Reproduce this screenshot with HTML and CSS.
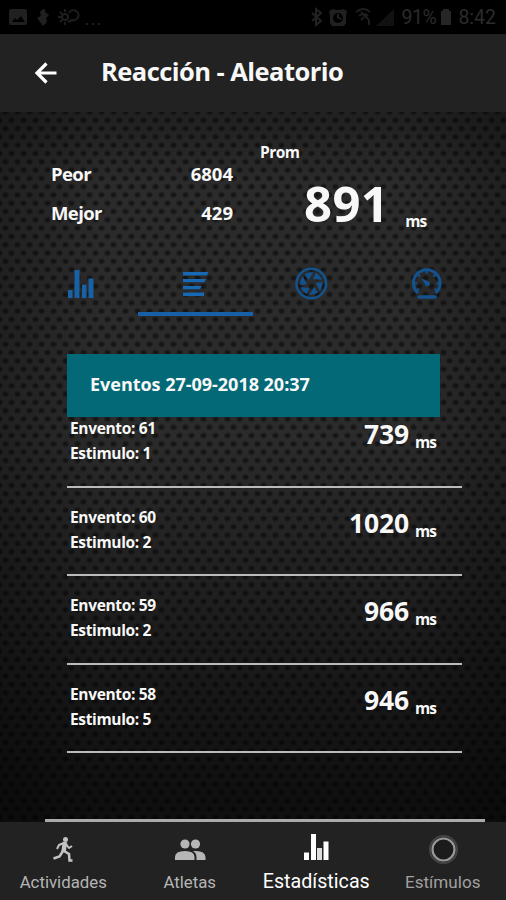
FILE: index.html
```html
<!DOCTYPE html>
<html lang="es">
<head>
    <meta charset="UTF-8">
    <meta name="viewport" content="width=device-width, initial-scale=1.0">
    <title>Reacción - Aleatorio</title>
    <link rel="stylesheet" href="styles.css">
</head>
<body>

    <!-- Status Bar -->
    <div class="status-bar">
        <svg class="status-left" width="96" height="34" viewBox="0 0 96 34">
            <path fill-rule="evenodd" d="M11 9h14q2 0 2 2v12q0 2-2 2H11q-2 0-2-2V11q0-2 2-2zM12 22h13l-4-6-4 4-2-2z"/>
            <path d="M43 9a2 2 0 0 1 2 3l4 3-3 3 1 4-4 4-3-4-3-4 4-2-1-4z"/>
            <g fill="none" stroke="#1e1e1e" stroke-width="2">
                <circle cx="65" cy="17" r="3"/>
                <path d="M65 9v3M65 22v3M58 17h3M60 12l2 2M60 22l2-2M69 13a5 5 0 1 1 3 7l-4 2"/>
            </g>
            <path d="M86 23h2v2h-2zM92 23h2v2h-2zM98 23h2v2h-2z"/>
        </svg>
        <div class="status-right">
            <svg class="status-signals" width="88" height="34" viewBox="0 0 88 34">
                <path fill="none" stroke="#222" stroke-width="2" d="M5 13l9 8-5 4V9l5 4-9 8"/>
                <path fill-rule="evenodd" d="M22 11l4-2 3 1h4l3-1 4 2-1 5v7l-2 3H25l-2-3v-7zM31 13a5 5 0 1 0 0 10 5 5 0 0 0 0-10zM30 14h2v3l3 2-1 1-4-2z"/>
                <path fill="none" stroke="#1e1e1e" stroke-width="2" d="M49 12q8-6 14 0M52 16q5-4 9 0M54 12l8 8M54 20l3-3M62 20v5"/>
                <path fill="#111" d="M69 26L87 9v17z"/>
            </svg>
            <span class="battery">91%</span>
            <svg width="14" height="34" viewBox="0 0 14 34"><path fill="#262626" d="M4 9h6v2h2v14H2V11h2z"/></svg>
            <span class="clock">8:42</span>
        </div>
    </div>

    <!-- Header -->
    <div class="header">
        <svg class="back" width="24" height="24" viewBox="0 0 24 24">
            <path d="M23.500 12H3.500M13.500 2.500L4 12l9.500 9.500"/>
        </svg>
        <h1>Reacción - Aleatorio</h1>
    </div>

    <div class="content">
        <!-- Summary -->
        <div class="summary">
            <div class="limits">
                <div class="limit"><span>Peor</span><span class="limit-value">6804</span></div>
                <div class="limit"><span>Mejor</span><span class="limit-value">429</span></div>
            </div>
            <div class="average">
                <div class="average-label">Prom</div>
                <div class="average-value"><span class="number">891</span><span class="unit">ms</span></div>
            </div>
        </div>

        <!-- Tabs -->
        <div class="tabs">
            <div class="tab">
                <svg width="36" height="36" viewBox="0 0 36 36" fill="#1761a4">
                    <path d="M6 25h4.500v8H6zM12.500 5h5v28h-5zM20 19.500h4.500V33H20zM26.500 13.500h5V33h-5z"/>
                </svg>
            </div>
            <div class="tab active">
                <svg width="36" height="36" viewBox="0 0 36 36" fill="#1769b4">
                    <path d="M6 7h25.500L30 10.500H6zM6 14h23l-1.500 3.300H6zM6 21h18.500L23 24.300H6zM6 27.500h21V31H6z"/>
                </svg>
            </div>
            <div class="tab">
                <svg width="36" height="36" viewBox="0 0 36 36">
                    <circle cx="18.300" cy="18.500" r="14.800" fill="none" stroke="#13528d" stroke-width="2.500"/>
                    <g fill="#13528d">
                        <path id="blade" d="M11.500 9.500Q15 7 20.500 7.300L15.500 15z"/>
                        <use href="#blade" transform="rotate(60 18.300 18.500)"/>
                        <use href="#blade" transform="rotate(120 18.300 18.500)"/>
                        <use href="#blade" transform="rotate(180 18.300 18.500)"/>
                        <use href="#blade" transform="rotate(240 18.300 18.500)"/>
                        <use href="#blade" transform="rotate(300 18.300 18.500)"/>
                    </g>
                </svg>
            </div>
            <div class="tab">
                <svg width="36" height="36" viewBox="0 0 36 36" fill="none" stroke="#13528d">
                    <path stroke-width="3" d="M10 28a13.300 13.300 0 1 1 17.500 0"/>
                    <path stroke-width="2" d="M18.700 5v3.500M10 9.500l2 2M27.500 9.500l-2 2M5.500 18.500H9M28.500 18.500H32M9 25l2-1M28.500 25l-2-1"/>
                    <path fill="#13528d" stroke="none" d="M13.500 13.500l6.500 2.700a2.600 2.600 0 1 1-3 3.300z"/>
                    <path stroke-width="3.500" stroke-linecap="round" d="M11 32h16"/>
                </svg>
            </div>
        </div>

        <!-- Event List -->
        <div class="events">
            <div class="events-title"><span>Eventos 27-09-2018 20:37</span></div>
            <div class="event">
                <div class="event-info"><div>Envento: 61</div><div>Estimulo: 1</div></div>
                <div class="event-time"><span class="number">739</span><span class="unit">ms</span></div>
            </div>
            <div class="event">
                <div class="event-info"><div>Envento: 60</div><div>Estimulo: 2</div></div>
                <div class="event-time"><span class="number">1020</span><span class="unit">ms</span></div>
            </div>
            <div class="event">
                <div class="event-info"><div>Envento: 59</div><div>Estimulo: 2</div></div>
                <div class="event-time"><span class="number">966</span><span class="unit">ms</span></div>
            </div>
            <div class="event">
                <div class="event-info"><div>Envento: 58</div><div>Estimulo: 5</div></div>
                <div class="event-time"><span class="number">946</span><span class="unit">ms</span></div>
            </div>
        </div>
        <div class="bottom-line"></div>
    </div>

    <!-- Bottom Navigation -->
    <div class="bottom-nav">
        <div class="nav-item">
            <svg width="32" height="32" viewBox="0 0 32 32">
                <circle cx="18.500" cy="5.500" r="2.500" fill="#c4c4c4"/>
                <path fill="none" stroke="#c4c4c4" stroke-width="2" stroke-linejoin="round" d="M17 9l-5 2-2 4M19 10l3 4 3-2"/>
                <path fill="none" stroke="#c4c4c4" stroke-width="4.500" d="M18 8l-1.500 10"/>
                <path fill="none" stroke="#c4c4c4" stroke-width="2.500" d="M16 17l-3.500 5.500-6 2M17 17l5 3 .5 6.500h3"/>
            </svg>
            <span>Actividades</span>
        </div>
        <div class="nav-item">
            <svg width="34" height="32" viewBox="0 0 34 32" fill="#b6b6b6">
                <circle cx="12" cy="10" r="4.600"/>
                <circle cx="22.500" cy="10" r="4.600"/>
                <path d="M2 26v-3q0-6 10-6 9.500 0 9.500 6v3zM20 17q12-1 12.500 6v3H23.500v-3q0-4-3.500-6z"/>
            </svg>
            <span>Atletas</span>
        </div>
        <div class="nav-item selected">
            <svg width="32" height="32" viewBox="0 0 32 32" fill="#fff">
                <path d="M4 18.500h5V26H4zM11 0h5v26h-5zM23.500 7.500h5V26h-5z"/>
                <path fill="#ddd" d="M17 14h5v12h-5z"/>
            </svg>
            <span>Estadísticas</span>
        </div>
        <div class="nav-item dim">
            <svg width="32" height="32" viewBox="0 0 32 32" fill="none">
                <circle cx="16.500" cy="15.500" r="13.500" stroke="#444" stroke-width="2"/>
                <circle cx="16.500" cy="15.500" r="11" fill="#1b1b1b" stroke="#999" stroke-width="2.200"/>
            </svg>
            <span>Estímulos</span>
        </div>
    </div>

</body>
</html>
```

FILE: styles.css
```css
* {
    box-sizing: border-box;
}

body {
    margin: 0;
    width: 506px;
    height: 900px;
    display: flex;
    flex-direction: column;
    overflow: hidden;
    background-color: #222;
    color: #f8f8f8;
    font-family: "Open Sans", "Noto Sans", sans-serif;
    font-weight: 700;
    font-stretch: 90%;
}

svg {
    display: block;
    flex: none;
}

.status-bar {
    height: 34px;
    display: flex;
    justify-content: space-between;
    background-color: #000;
    color: #2b2b2b;
    font-family: Roboto, sans-serif;
    font-weight: 400;
    font-size: 19.500px;
    line-height: 35px;
}

.status-bar svg {
    fill: #202020;
}

.status-left {
    overflow: visible;
}

.status-right {
    display: flex;
    padding-right: 10px;
}

.status-signals {
    margin-right: 6px;
}

.battery {
    margin: 0 3px 0 0;
    letter-spacing: -0.4px;
}

.clock {
    margin-left: 5px;
}

.header {
    height: 78px;
    display: flex;
    align-items: center;
    padding-left: 33px;
}

.back path {
    fill: none;
    stroke: #fff;
    stroke-width: 3.2;
}

h1 {
    margin: -4px 0 0 44px;
    font-size: 25.500px;
    font-weight: 700;
    line-height: 36px;
    letter-spacing: -0.55px;
}

.content {
    flex: 1;
    display: flex;
    flex-direction: column;
    background-color: #2b2b2b;
    background-image:
        linear-gradient(to bottom, rgba(0, 0, 0, 0.25), transparent 10%, transparent 45%, rgba(0, 0, 0, 0.65) 97%),
        linear-gradient(to right, rgba(0, 0, 0, 0.25), transparent 20%, transparent 80%, rgba(0, 0, 0, 0.25)),
        radial-gradient(ellipse 4px 3.500px at 5.500px 4px, #151515 40%, transparent 100%),
        radial-gradient(ellipse 4px 3.500px at 11.500px 12.300px, #151515 40%, transparent 100%),
        radial-gradient(ellipse 4px 3.500px at -0.500px 12.300px, #151515 40%, transparent 100%);
    background-size: 100% 100%, 100% 100%, 12px 16.600px, 12px 16.600px, 12px 16.600px;
    background-position: 0 0, 0 0, 0 -4px, 0 -4px, 0 -4px;
}

.summary {
    height: 141px;
    display: flex;
    padding-left: 51px;
}

.limits {
    width: 182px;
    padding-top: 42px;
}

.limit {
    display: flex;
    justify-content: space-between;
    height: 39px;
    font-size: 18.500px;
    line-height: 39px;
    letter-spacing: -0.6px;
}

.limit-value {
    letter-spacing: 0;
}

.average {
    padding: 28px 0 0 27px;
}

.average-label {
    font-size: 15.500px;
    line-height: 24px;
    letter-spacing: -0.5px;
}

.average-value {
    display: flex;
    align-items: baseline;
    padding-left: 44px;
}

.average-value .number {
    font-size: 49px;
    line-height: 78px;
    letter-spacing: 0.4px;
}

.unit {
    font-size: 15.500px;
    letter-spacing: -0.9px;
}

.average-value .unit {
    margin-left: 16px;
    padding-top: 35px;
    align-self: center;
}

.tabs {
    display: flex;
    padding: 0 22px;
}

.tab {
    flex: 1;
    display: flex;
    justify-content: center;
    height: 63px;
    padding-top: 12px;
}

.tab.active {
    border-bottom: 4px solid #1760a8;
}

.events {
    padding: 38px 44px 0 67px;
}

.events-title {
    width: 373px;
    height: 63px;
    padding-left: 23px;
    background-color: #036977;
    font-size: 18px;
    line-height: 60px;
    letter-spacing: -0.02px;
}

.event {
    display: flex;
    justify-content: space-between;
    height: 88.500px;
    padding: 17px 26px 0 3px;
    border-bottom: 2px solid #bbb;
}

.event:nth-child(2) {
    height: 70.500px;
    padding-top: 0;
}

.event:nth-child(2) .event-info {
    margin-top: -1px;
}

.event-info {
    font-size: 15.500px;
    line-height: 25.300px;
    letter-spacing: -0.35px;
}

.event-time {
    display: flex;
    align-items: flex-start;
}

.event-time .number {
    font-size: 26.500px;
    line-height: 36px;
    letter-spacing: -0.2px;
}

.event:nth-child(2) .event-time {
    margin-top: -1px;
}

.event-time .unit {
    margin-left: 6px;
    padding-top: 8px;
    line-height: 36px;
}

.bottom-line {
    height: 3px;
    margin: auto 21px 0 45px;
    background-color: #aaa;
}

.bottom-nav {
    height: 78px;
    display: flex;
    padding: 12px 0 0;
    font-family: Roboto, sans-serif;
    font-weight: 400;
    font-stretch: 100%;
}

.nav-item {
    width: 126.500px;
    display: flex;
    flex-direction: column;
    align-items: center;
    color: #b5b5b5;
    font-size: 16.800px;
    line-height: 32px;
}

.nav-item.selected {
    color: #fff;
    font-size: 19.700px;
    line-height: 31px;
}

.nav-item.dim {
    color: #a0a0a0;
    font-size: 17.100px;
}
```
